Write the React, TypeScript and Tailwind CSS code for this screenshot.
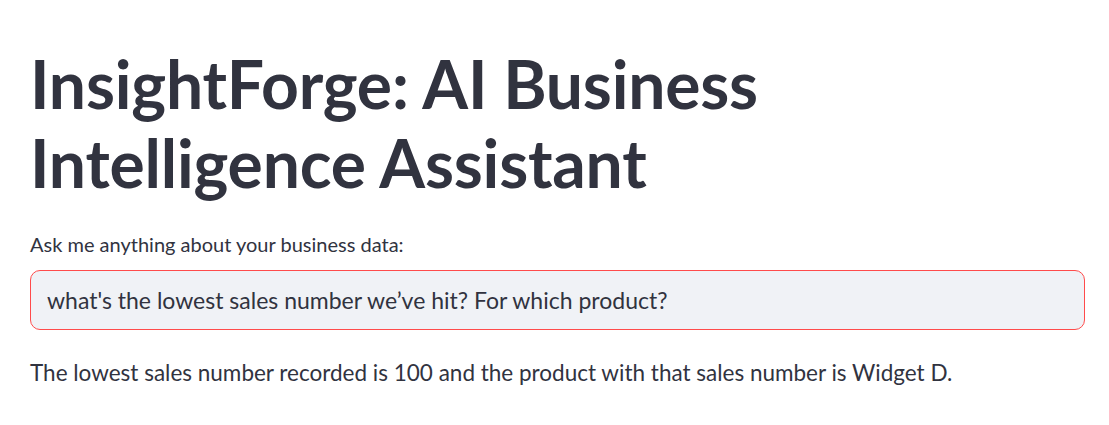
export default function App() {
  return (
    <div className="min-h-screen bg-white text-[#31333f] font-['Lato',sans-serif]">
      <div className="pl-[30px] pr-[24px] pt-[44px]">
        <h1 className="text-[66px] font-bold leading-[79px] tracking-[-0.2px]">
          InsightForge: AI Business
          <br />
          Intelligence Assistant
        </h1>

        <div className="mt-[30px]">
          <label className="block text-[20px] leading-[24px]">Ask me anything about your business data:</label>
          <div className="mt-[14px] h-[60px] rounded-[10px] border border-[#ff4b4b] bg-[#f0f2f6] flex items-center px-[16px]">
            <span className="text-[23px]">what's the lowest sales number we’ve hit? For which product?</span>
          </div>
        </div>

        <p className="mt-[28px] text-[22.5px] leading-[30px]">
          The lowest sales number recorded is 100 and the product with that sales number is Widget D.
        </p>
      </div>
    </div>
  );
}
